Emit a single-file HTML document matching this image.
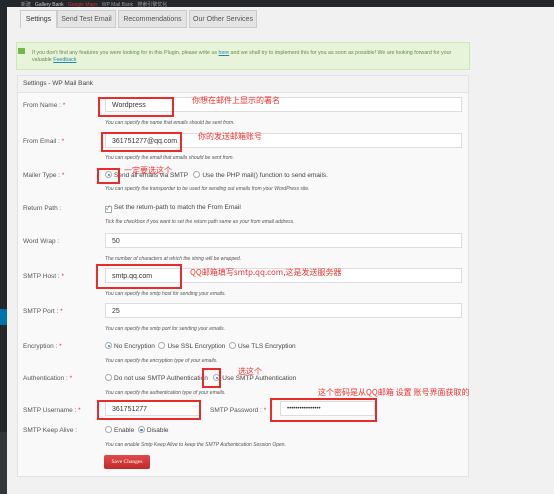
<!DOCTYPE html>
<html><head><meta charset="utf-8"><style>
*{margin:0;padding:0;box-sizing:border-box}
body{width:554px;height:494px;background:#f1f1f1;position:relative;overflow:hidden;font-family:"Liberation Sans","Noto Sans CJK SC",sans-serif;color:#444}
.a{position:absolute;white-space:nowrap}
.lbl{font-size:6.5px;color:#555}
.lbl b{color:#d33;font-weight:normal}
.help{font-size:5px;color:#555;font-style:italic}
.inp{position:absolute;background:#fff;border:1px solid #ddd;height:15px;font-size:7px;padding:4px 0 0 6px;color:#333}
.red{position:absolute;border:2.5px solid #e82c2c}
.cn{position:absolute;color:#f03030;font-size:8px;white-space:nowrap;font-family:"Noto Sans CJK SC",sans-serif}
.r{display:inline-block;width:7px;height:7px;border:1px solid #aaa;border-radius:50%;background:#fff;vertical-align:-1px;margin-right:2px;position:relative}
.r.on::after{content:"";position:absolute;left:1.5px;top:1.5px;width:2.5px;height:2.5px;border-radius:50%;background:#1e8cbe}
.opt{font-size:6.5px;color:#444}
.tab{position:absolute;top:10px;height:18px;background:#e4e4e4;border:1px solid #ccc;font-size:7px;padding-top:5px;text-align:center;color:#555}
</style></head><body>
<div class="a" style="left:0;top:0;width:554px;height:7px;background:#23282d"></div>
<div class="a" style="left:0;top:0;width:7px;height:432px;background:#23282d"></div>
<div class="a" style="left:0;top:432px;width:7px;height:62px;background:#32373c"></div>
<div class="a" style="left:0;top:309px;width:7px;height:16px;background:#0073aa"></div>
<div class="a" style="left:0;top:1px;font-size:5px;color:#999">&nbsp;&nbsp;&nbsp;&nbsp;&nbsp;&nbsp;&nbsp;&nbsp;&nbsp;&nbsp;&nbsp;&nbsp;&nbsp;&nbsp;&nbsp;新建 &nbsp; <span style="color:#ccc">Gallery Bank</span> &nbsp; <span style="color:#c33">Google Maps</span> &nbsp; WP Mail Bank &nbsp; 搜索引擎优化</div>

<div class="tab" style="left:20px;width:37px;background:#f1f1f1;border-bottom:none;color:#333">Settings</div>
<div class="tab" style="left:57px;width:59px">Send Test Email</div>
<div class="tab" style="left:118px;width:69px">Recommendations</div>
<div class="tab" style="left:189px;width:68px">Our Other Services</div>

<div class="a" style="left:16px;top:42px;width:454px;height:28px;background:#e7f4d9;border:1px solid #cfe8b3"></div>
<div class="a" style="left:18px;top:48px;width:7px;height:6px;background:#6fb84a"></div>
<div class="a" style="left:32px;top:50px;font-size:5.3px;color:#6a8a4a;line-height:6.5px">If you don't find any features you were looking for in this Plugin, please write us <u style="color:#28a">here</u> and we shall try to implement this for you as soon as possible! We are looking forward for your<br>valuable <u style="color:#28a">Feedback</u></div>

<div class="a" style="left:17px;top:75px;width:452px;height:402px;background:#f9f9f9;border:1px solid #e2e2e2"></div>
<div class="a" style="left:17px;top:75px;width:452px;height:18px;background:#f3f3f3;border:1px solid #e2e2e2"></div>
<div class="a" style="left:23px;top:80px;font-size:6.5px;color:#444">Settings - WP Mail Bank</div>

<div class="a lbl" style="left:23px;top:102px">From Name : <b>*</b></div>
<div class="inp" style="left:105px;top:97px;width:357px">Wordpress</div>
<div class="a help" style="left:105px;top:120px">You can specify the name that emails should be sent from.</div>

<div class="a lbl" style="left:23px;top:138px">From Email : <b>*</b></div>
<div class="inp" style="left:105px;top:133px;width:357px">361751277@qq.com</div>
<div class="a help" style="left:105px;top:155px">You can specify the email that emails should be sent from.</div>

<div class="a lbl" style="left:23px;top:172px">Mailer Type : <b>*</b></div>
<div class="a opt" style="left:105px;top:171px"><span class="r on"></span>Send all emails via SMTP &nbsp; <span class="r"></span>Use the PHP mail() function to send emails.</div>
<div class="a help" style="left:105px;top:186px">You can specify the transporder to be used for sending out emails from your WordPress site.</div>

<div class="a lbl" style="left:23px;top:205px">Return Path :</div>
<div class="a opt" style="left:105px;top:204px"><span style="display:inline-block;width:7px;height:7px;border:1px solid #aaa;background:#fff;font-size:6px;line-height:5px;color:#1e8cbe;vertical-align:-1px;margin-right:2px">✓</span>Set the return-path to match the From Email</div>
<div class="a help" style="left:105px;top:219px">Tick the checkbox if you want to set the return path same as your from email address.</div>

<div class="a lbl" style="left:23px;top:238px">Word Wrap :</div>
<div class="inp" style="left:105px;top:233px;width:357px">50</div>
<div class="a help" style="left:105px;top:256px">The number of characters at which the string will be wrapped.</div>

<div class="a lbl" style="left:23px;top:273px">SMTP Host : <b>*</b></div>
<div class="inp" style="left:105px;top:268px;width:357px">smtp.qq.com</div>
<div class="a help" style="left:105px;top:291px">You can specify the smtp host for sending your emails.</div>

<div class="a lbl" style="left:23px;top:308px">SMTP Port : <b>*</b></div>
<div class="inp" style="left:105px;top:303px;width:357px">25</div>
<div class="a help" style="left:105px;top:326px">You can specify the smtp port for sending your emails.</div>

<div class="a lbl" style="left:23px;top:343px">Encryption : <b>*</b></div>
<div class="a opt" style="left:105px;top:342px"><span class="r on"></span>No Encryption &nbsp;<span class="r"></span>Use SSL Encryption &nbsp;<span class="r"></span>Use TLS Encryption</div>
<div class="a help" style="left:105px;top:358px">You can specify the encryption type of your emails.</div>

<div class="a lbl" style="left:23px;top:375px">Authentication : <b>*</b></div>
<div class="a opt" style="left:105px;top:374px"><span class="r"></span>Do not use SMTP Authentication &nbsp; <span class="r on"></span>Use SMTP Authentication</div>
<div class="a help" style="left:105px;top:390px">You can specify the authentication type of your emails.</div>

<div class="a lbl" style="left:23px;top:407px">SMTP Username : <b>*</b></div>
<div class="inp" style="left:105px;top:401px;width:95px">361751277</div>
<div class="a lbl" style="left:210px;top:407px">SMTP Password : <b>*</b></div>
<div class="inp" style="left:280px;top:401px;width:95px;font-size:6px">••••••••••••••••</div>

<div class="a lbl" style="left:23px;top:427px">SMTP Keep Alive :</div>
<div class="a opt" style="left:105px;top:426px"><span class="r"></span>Enable &nbsp;<span class="r on"></span>Disable</div>
<div class="a help" style="left:105px;top:442px">You can enable Smtp Keep Alive to keep the SMTP Authentication Session Open.</div>

<div class="a" style="left:104px;top:455px;width:46px;height:14px;background:linear-gradient(#e04a4a,#c02a2a);border-radius:2px;color:#fff;font-size:5.5px;text-align:center;padding-top:4px;font-family:'Liberation Serif',serif">Save Changes</div>

<div class="red" style="left:98px;top:97px;width:76px;height:20px"></div>
<div class="red" style="left:101px;top:132px;width:81px;height:20px"></div>
<div class="red" style="left:97px;top:168px;width:23px;height:16px"></div>
<div class="red" style="left:96px;top:264px;width:86px;height:25px"></div>
<div class="red" style="left:202px;top:368px;width:19px;height:20px"></div>
<div class="red" style="left:97px;top:400px;width:104px;height:20px"></div>
<div class="red" style="left:270px;top:398px;width:107px;height:24px"></div>

<div class="cn" style="left:192px;top:95px">你想在邮件上显示的署名</div>
<div class="cn" style="left:198px;top:131px">你的发送邮箱账号</div>
<div class="cn" style="left:124px;top:165px">一定要选这个</div>
<div class="cn" style="left:190px;top:267px">QQ邮箱填写smtp.qq.com,这是发送服务器</div>
<div class="cn" style="left:238px;top:366px">选这个</div>
<div class="cn" style="left:318px;top:387px">这个密码是从QQ邮箱 设置 账号界面获取的</div>
</body></html>
